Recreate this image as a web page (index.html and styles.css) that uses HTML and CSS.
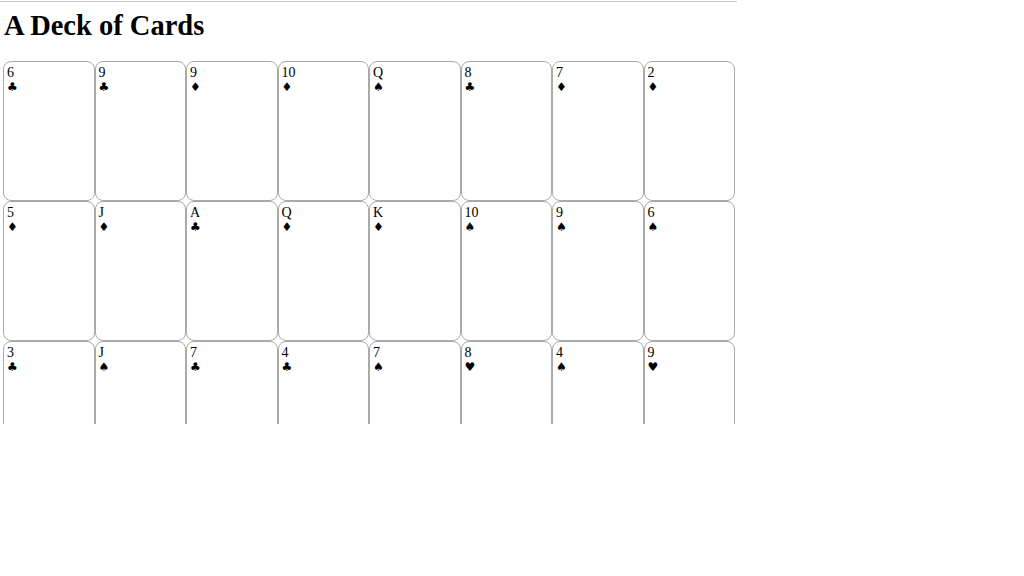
FILE: index.html
```html
<!DOCTYPE html>
<html>
<head>
<meta charset="utf-8">
<link rel="stylesheet" href="styles.css">
</head>
<body>
<div class="page">
  <h1 class="title">A Deck of Cards</h1>
  <div class="deck">
    <div class="card"><div class="rank">6</div><div class="suit">♣</div></div>
    <div class="card"><div class="rank">9</div><div class="suit">♣</div></div>
    <div class="card"><div class="rank">9</div><div class="suit">♦</div></div>
    <div class="card"><div class="rank">10</div><div class="suit">♦</div></div>
    <div class="card"><div class="rank">Q</div><div class="suit">♠</div></div>
    <div class="card"><div class="rank">8</div><div class="suit">♣</div></div>
    <div class="card"><div class="rank">7</div><div class="suit">♦</div></div>
    <div class="card"><div class="rank">2</div><div class="suit">♦</div></div>
    <div class="card"><div class="rank">5</div><div class="suit">♦</div></div>
    <div class="card"><div class="rank">J</div><div class="suit">♦</div></div>
    <div class="card"><div class="rank">A</div><div class="suit">♣</div></div>
    <div class="card"><div class="rank">Q</div><div class="suit">♦</div></div>
    <div class="card"><div class="rank">K</div><div class="suit">♦</div></div>
    <div class="card"><div class="rank">10</div><div class="suit">♠</div></div>
    <div class="card"><div class="rank">9</div><div class="suit">♠</div></div>
    <div class="card"><div class="rank">6</div><div class="suit">♠</div></div>
    <div class="card"><div class="rank">3</div><div class="suit">♣</div></div>
    <div class="card"><div class="rank">J</div><div class="suit">♠</div></div>
    <div class="card"><div class="rank">7</div><div class="suit">♣</div></div>
    <div class="card"><div class="rank">4</div><div class="suit">♣</div></div>
    <div class="card"><div class="rank">7</div><div class="suit">♠</div></div>
    <div class="card"><div class="rank">8</div><div class="suit">♥</div></div>
    <div class="card"><div class="rank">4</div><div class="suit">♠</div></div>
    <div class="card"><div class="rank">9</div><div class="suit">♥</div></div>
  </div>
</div>
</body>
</html>
```
FILE: styles.css
```css
html, body {
  margin: 0;
  padding: 0;
  background: #fff;
}
body {
  font-family: "Liberation Serif", "Times New Roman", serif;
  color: #000;
}
.page {
  margin-top: 1px;
  width: 737px;
  height: 422px;
  border-top: 1px solid #c8c8c8;
  overflow: hidden;
}
.title {
  margin: 8px 0 19px 4px;
  font-size: 28.5px;
  line-height: 32px;
  font-weight: bold;
}
.deck {
  display: grid;
  grid-template-columns: repeat(8, 91.5px);
  grid-auto-rows: 140px;
  padding-left: 3px;
}
.card {
  box-sizing: border-box;
  border: 1.5px solid #aaaaaa;
  border-radius: 8px;
  padding: 2.5px 3px;
  font-size: 14px;
  line-height: 16px;
}
.rank {
  height: 16px;
}
.suit {
  font-family: "DejaVu Sans", sans-serif;
  font-size: 12px;
  line-height: 12px;
}
```
